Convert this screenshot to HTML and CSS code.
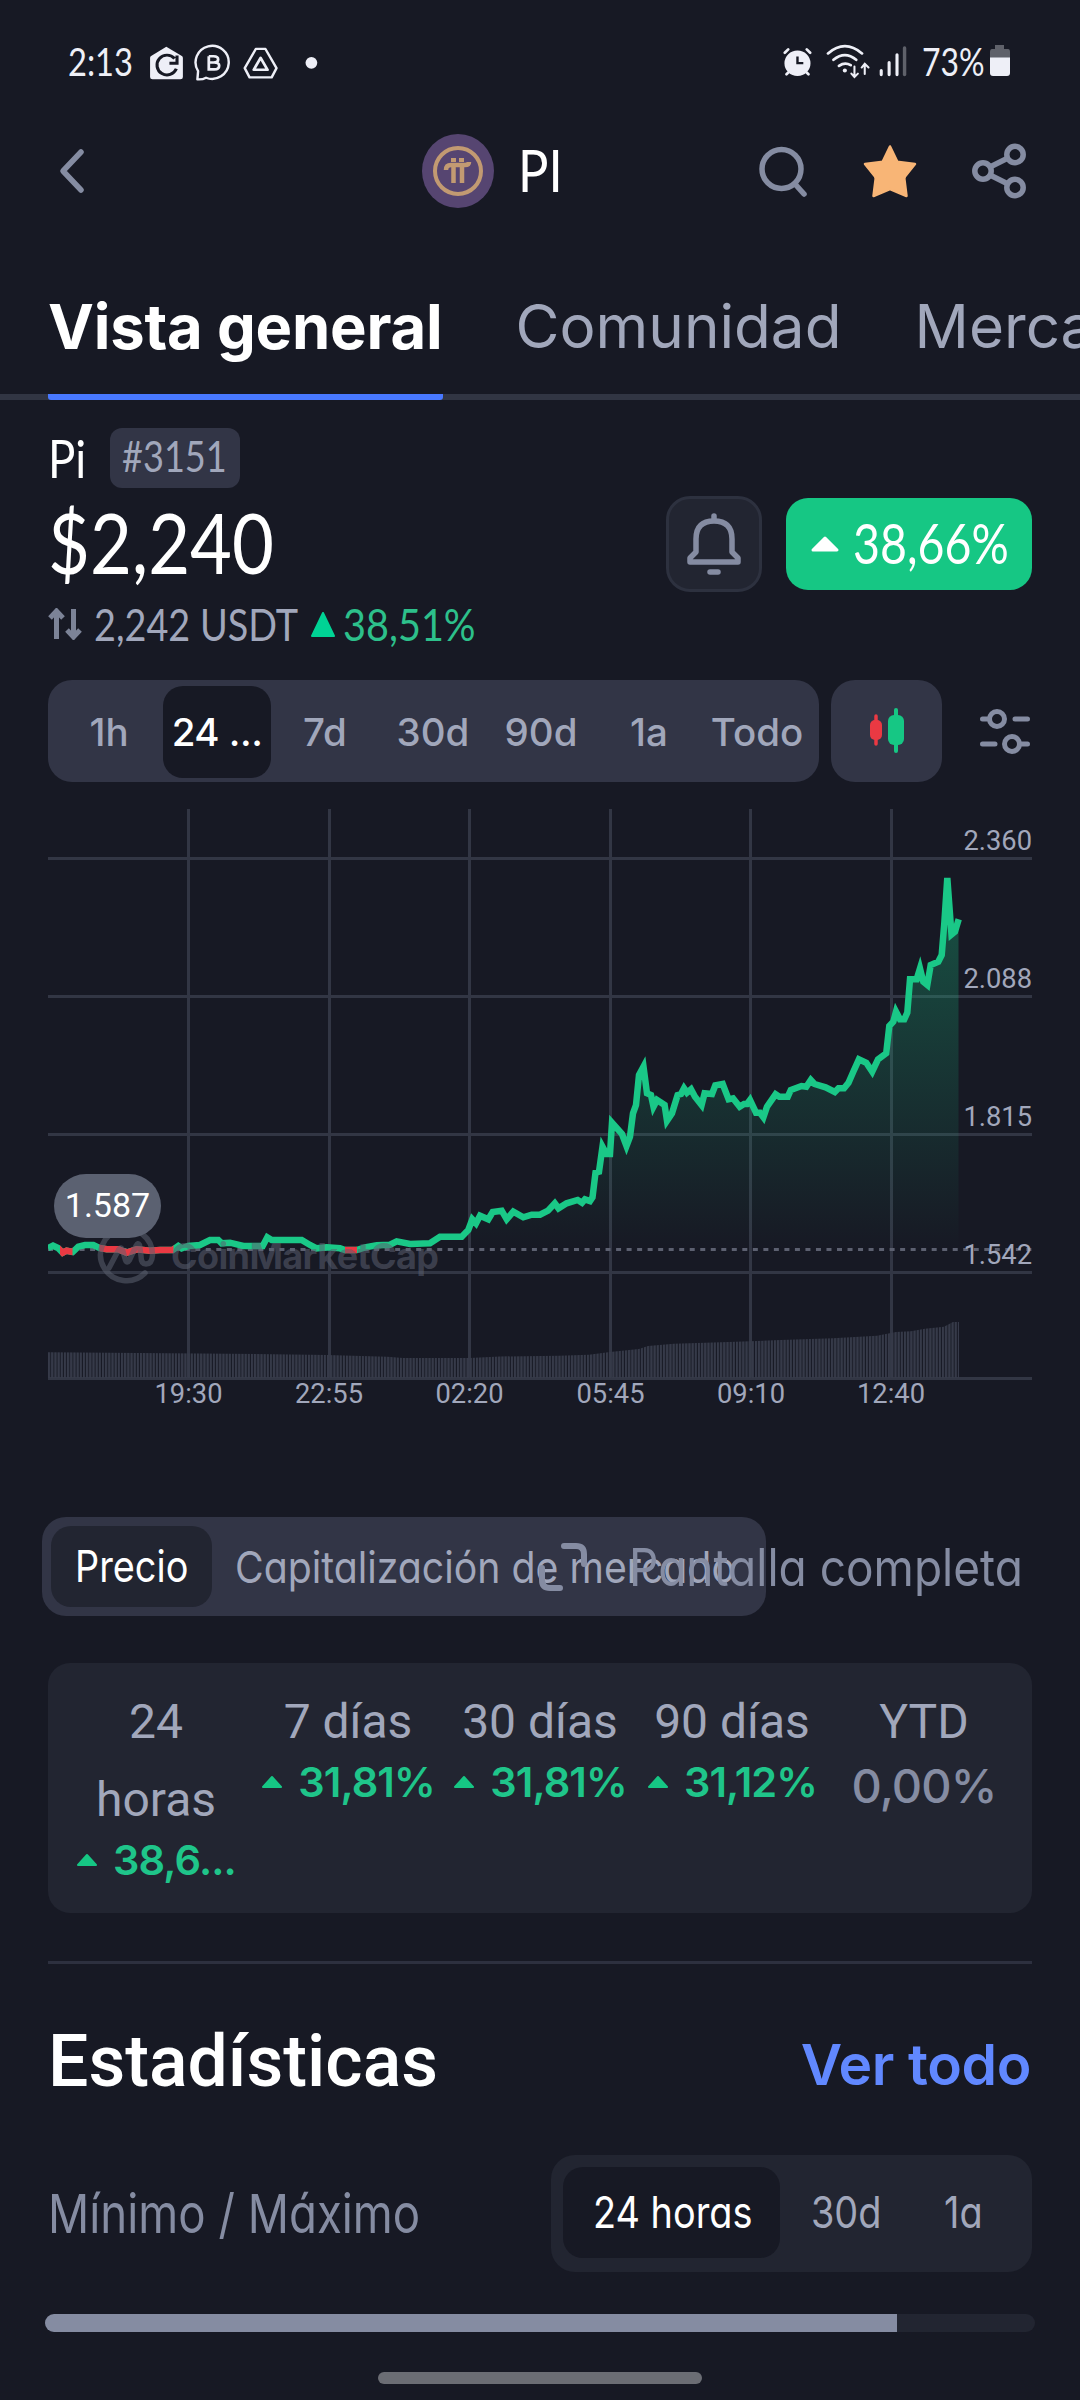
FILE: index.html
```html
<!DOCTYPE html>
<html lang="es">
<head>
<meta charset="utf-8">
<title>PI</title>
<link rel="stylesheet" href="styles.css">
</head>
<body>
<div class="status">
  <span class="status-time"><span class="narrow">2:13</span></span>
  <svg class="status-apps" viewBox="430 130 495 115" preserveAspectRatio="none">
    <path fill="#eeeff7" d="M483 138L528 166Q531 168 531 172V230Q531 237 524 237H443Q436 237 436 230V172Q436 168 439 166Z"/>
    <path d="M507 174A29 30 0 1 0 512 205M514 165V188H492" fill="none" stroke="#171924" stroke-width="9"/>
    <path d="M573 237L575 212A48 50 0 1 1 598 232Q588 238 573 237Z" fill="none" stroke="#eeeff7" stroke-width="7" stroke-linejoin="round"/>
    <path d="M606 167V207H622Q636 207 636 196Q636 186 622 186H606M606 167H620Q633 167 633 177Q633 186 620 186" fill="none" stroke="#eeeff7" stroke-width="8"/>
    <path d="M742 145H770L802 203L788 231H724L710 203Z" fill="none" stroke="#eeeff7" stroke-width="7" stroke-linejoin="round"/>
    <path d="M756 172L776 208H736Z" fill="none" stroke="#eeeff7" stroke-width="8" stroke-linejoin="round"/>
    <ellipse cx="903" cy="187" rx="17" ry="18" fill="#eeeff7"/>
  </svg>
  <svg class="status-signals" viewBox="700 130 370 110" preserveAspectRatio="none">
    <g fill="none" stroke="#eeeff7" stroke-width="8" stroke-linecap="round">
      <path d="M711 159L721 149M785 159L775 149M716 223L724 215M780 223L772 215"/>
      <circle cx="748" cy="190" r="34" fill="#eeeff7"/>
      <path d="M748 170V190H765" stroke="#171924" stroke-linecap="butt" stroke-width="7"/>
      <path d="M837 161Q886 118 936 161M853 180Q886 152 919 180M869 198Q886 186 903 196"/>
      <path d="M914 200V228M905 221L914 231L924 221M944 222V196M935 203L944 192L955 203" stroke-width="6"/>
      <path d="M992 212V224M1015 188V224M1038 165V224" stroke-width="9"/>
      <path d="M1060 145V224" stroke="#5f616a" stroke-width="10"/>
    </g>
    <circle cx="886" cy="212" r="6" fill="#eeeff7"/>
  </svg>
  <span class="status-battery"><span class="narrow">73%</span></span>
  <svg width="22" height="32" viewBox="0 0 22 32">
    <path d="M6 0H15V4H19Q21 4 21 7V13H1V7Q1 4 3 4H6Z" fill="#5f616a"/>
    <path d="M1 12.500H21V28Q21 31 18 31H4Q1 31 1 28Z" fill="#eeeff7"/>
  </svg>
</div>

<header class="header">
  <svg class="back" width="28" height="48" viewBox="0 0 28 48"><path d="M22 5L4 24L22 43" fill="none" stroke="#858ca2" stroke-width="5.500" stroke-linecap="round" stroke-linejoin="round"/></svg>
  <div class="coin">
    <svg width="72" height="74" viewBox="0 0 72 74">
      <ellipse cx="36" cy="37" rx="36" ry="37" fill="#564571"/>
      <ellipse cx="36" cy="37" rx="23" ry="23" fill="none" stroke="#c29a72" stroke-width="4"/>
      <path d="M24 36Q24 31 29 31H43Q47 31 47 28M31.500 31V49M40 31V49" fill="none" stroke="#c29a72" stroke-width="4.500"/>
      <path d="M29 24H34V28H29ZM37 24H42V28H37Z" fill="#c29a72"/>
    </svg>
    <span class="coin-name narrow">PI</span>
  </div>
  <div class="actions">
    <svg width="50" height="54" viewBox="0 0 50 54"><circle cx="22.500" cy="25" r="19.500" fill="none" stroke="#858ca2" stroke-width="5.500"/><path d="M36 40L45 50" stroke="#858ca2" stroke-width="5.500" stroke-linecap="round"/></svg>
    <svg width="54" height="56" viewBox="0 0 54 56"><path d="M27 3.500L34 18Q34.500 19 36 19L52 21L42 33.500Q41 35 41.500 37L43.500 53L27 46L10.500 53L12.500 37Q13 35 12 33.500L2 21L18 19Q19.500 19 20 18Z" fill="#f8b576" stroke="#f8b576" stroke-width="2.500" stroke-linejoin="round"/></svg>
    <svg width="56" height="56" viewBox="0 0 56 56"><g fill="none" stroke="#858ca2" stroke-width="5.500"><circle cx="12" cy="28" r="8.200"/><circle cx="44" cy="11.500" r="8.200"/><circle cx="44" cy="44.500" r="8.200"/><path d="M19 24L37 15M19 32L37 41"/></g></svg>
  </div>
</header>

<nav class="tabs">
  <span class="tab tab-active">Vista general</span>
  <span class="tab">Comunidad</span>
  <span class="tab">Mercados</span>
</nav>

<main class="page">
  <div class="name-row">
    <span class="name"><span class="narrow">Pi</span></span>
    <span class="rank"><span class="narrow">#3151</span></span>
  </div>
  <div class="price-row">
    <span class="price narrow">$2,240</span>
    <span class="bell">
      <svg width="56" height="64" viewBox="0 0 56 64"><g fill="none" stroke="#858ca2" stroke-width="5.500" stroke-linecap="round" stroke-linejoin="round"><path d="M28 8V4"/><path d="M4 50V46L10 40V27Q10 9 28 9Q46 9 46 27V40L52 46V50Z"/><path d="M24 60H32"/></g></svg>
    </span>
    <span class="change">
      <svg width="30" height="18" viewBox="0 0 30 18"><path d="M15 3L27 15H3Z" fill="#fff" stroke="#fff" stroke-width="3" stroke-linejoin="round"/></svg>
      <span class="change-value">38,66%</span>
    </span>
  </div>
  <div class="pair-row">
    <svg width="34" height="32" viewBox="0 0 34 32"><path d="M8.500 31V4M2 10L8.500 3L15 10M25.500 1V28M19 22L25.500 29L32 22" fill="none" stroke="#7c8397" stroke-width="5"/></svg>
    <span class="pair-price"><span class="narrow">2,242 USDT</span></span>
    <svg width="24" height="25" viewBox="0 0 24 25"><path d="M12 1L23 24H1Z" fill="#00d395" stroke="#00d395" stroke-width="2" stroke-linejoin="round"/></svg>
    <span class="pair-change narrow">38,51%</span>
  </div>

  <div class="range-row">
    <div class="range">
      <span>1h</span><span class="range-active">24 ...</span><span>7d</span><span>30d</span><span>90d</span><span>1a</span><span>Todo</span>
    </div>
    <div class="candle">
      <svg width="36" height="46" viewBox="0 0 36 46"><path d="M6 8V36" stroke="#ea3943" stroke-width="3.500" stroke-linecap="round"/><rect x="0" y="12" width="12" height="20" rx="5" fill="#ea3943"/><path d="M26 2V43" stroke="#16c784" stroke-width="4" stroke-linecap="round"/><rect x="18" y="7" width="16" height="30" rx="6" fill="#16c784"/></svg>
    </div>
    <svg class="sliders" width="52" height="48" viewBox="0 0 52 48"><g fill="none" stroke="#858ca2" stroke-width="5" stroke-linecap="round"><circle cx="18" cy="12" r="7.500"/><path d="M3.500 12H9M36 12H48.500"/><circle cx="33" cy="37" r="7.500"/><path d="M42 37H48.500M3.500 37H16"/></g></svg>
  </div>

  <svg class="chart" width="984" height="638" viewBox="48 782 984 638">
    <defs>
      <linearGradient id="area" gradientUnits="userSpaceOnUse" x1="0" y1="870" x2="0" y2="1249">
        <stop offset="0" stop-color="#1ac887" stop-opacity=".34"/>
        <stop offset="1" stop-color="#1ac887" stop-opacity="0"/>
      </linearGradient>
      <pattern id="bars" patternUnits="userSpaceOnUse" x="48" y="0" width="3.170" height="10"><rect width="2.200" height="10" fill="#363a49"/></pattern>
      <clipPath id="below"><rect x="60" y="1200" width="12.500" height="80"/><rect x="99.500" y="1200" width="74" height="80"/><rect x="345" y="1200" width="12" height="80"/></clipPath>
      <path id="line" d="M48 1248L53 1245.700L58 1248L62.700 1252.700L66.700 1250.700L72.700 1252L78.300 1246.700L85 1245H93.300L99.300 1248L106.700 1249.300H118.300L126.700 1252.700L136.700 1249.300L150 1250.700L160 1250H172.700L178.300 1246L181.700 1248.300L188.300 1246L200 1245L210 1240H218.300L221.700 1243.300L230 1242.700L243.300 1246H262.700L267.300 1237.300L271.700 1240H301.700L310 1245L316.700 1248.300L326.700 1247.300L340 1248.300L345 1250H356.700L365 1247.300L376.700 1245.300L390 1244.700L396.700 1241.300L410 1244L430 1243.300L440 1236.700H461.700L468.300 1230L472.300 1219.300L476 1223.300L480 1215.700L488.300 1219.300L492.700 1212L501.700 1210.700L506.700 1219.300L513.300 1211.700L523.300 1217.300L531.700 1214.700H540L548 1210.700L554.800 1203.300L558.500 1208.300L566.600 1203.300L577.700 1200L582 1202.700L585 1199.300L590 1201L592.500 1197.300L595.500 1172.700L599 1171.700L602.500 1146.700L606.500 1154H610L612 1122.700L622 1134L626.500 1146L630 1136.700L633 1113.300L636 1105L639 1075L643.500 1066.700L647 1093.300L651 1095L653.500 1106.700L657 1100L664.600 1105L667 1120.700L672 1113.300L677.600 1095L681 1094L684 1088.300L687 1092.700L691 1089.300L695 1096.700L701.600 1105L704.600 1093.300L712 1094L715.300 1085.300L722.700 1084L728.600 1099.300L733 1098.300L739.700 1106.700L744 1104H747L750 1100L756 1112.700H760L763.400 1117.300L767 1106.700L775.600 1094.300L779.300 1096.700H787.800L790.800 1090L801.500 1086L806.300 1086.700L810.800 1080L814.500 1084L825.600 1087.300L834.800 1092L838.500 1088.300H844L848.500 1082.700L853.300 1071.700L858.900 1059.300L866.300 1062.700L872.200 1071.700L878 1059.300L886.200 1053.300L889.300 1026L893.300 1021.700L896 1011.700L900 1019.300H904.300L907.300 1012.700L910 979.300H916.700L920 968.500L923.300 981.700L927.300 985L930.700 965L938.300 961.700L941.700 955L944.300 923.300L947.300 878L951.500 934.500L955 931.700L958.700 919.300"/>
    </defs>
    <g stroke="#323644" stroke-width="3">
      <path d="M188.500 809V1378M329.500 809V1378M469.500 809V1378M610.500 809V1378M750.500 809V1378M891.500 809V1378"/>
      <path d="M48 858.500H1032M48 996.500H1032M48 1134.500H1032M48 1272.500H1032M48 1378.500H1032"/>
    </g>
    <path fill="url(#bars)" d="M48 1352.300L227 1353.700L327 1355L387 1356.700L403 1358H470L500 1356.500L559 1355.700L589 1354.700L610 1352L639 1349L648 1346L674 1343.700L729 1342L781 1340L833 1338.300L877 1335.700L896 1332L911 1331.300L925 1328.700L944 1326.700L953 1322H959V1378H48Z"/>
    <path fill="url(#area)" d="M468 1249V1230L472 1219L476 1223L480 1216L488 1219L493 1212L502 1211L507 1219L513 1212L523 1217L540 1215L548 1211L555 1203L567 1203L578 1200L592 1197L595 1173L599 1172L602 1147L607 1154H610L612 1123L622 1134L626 1146L630 1137L633 1113L636 1105L639 1075L643 1067L647 1093L651 1095L653 1107L657 1100L665 1105L667 1121L672 1113L678 1095L684 1088L691 1089L702 1105L705 1093H712L715 1085L723 1084L729 1099L733 1098L740 1107L744 1104L750 1100L756 1113H760L763 1117L767 1107L776 1094L779 1097H788L791 1090L801 1086L811 1080L826 1087L835 1092L838 1088H844L849 1083L859 1059L866 1063L872 1072L878 1059L886 1053L889 1026L896 1012L900 1019H904L907 1013L910 979H917L920 968L927 985L931 965L938 962L942 955L944 923L947 878L951 935L955 932L958.500 919V1249Z"/>
    <path d="M48 1249.500H1032" stroke="#5c6070" stroke-width="3" stroke-dasharray="5 5.520"/>
    <g fill="none" stroke-width="6.500" stroke-miterlimit="5">
      <use href="#line" class="line-up"/>
      <use href="#line" class="line-down" clip-path="url(#below)"/>
    </g>
    <g class="watermark">
      <path d="M145 1273A26 26 0 1 1 152.500 1255Q152 1264 146 1264Q141 1264 141 1256L139.500 1245Q138 1242 136 1246L129.500 1260Q127 1264 125.500 1260L122.500 1250Q121 1246 118.500 1250L109 1268" fill="none" stroke-width="5.500" stroke-linecap="round"/>
      <text x="171" y="1269" textLength="268">CoinMarketCap</text>
    </g>
    <rect x="54" y="1174" width="107" height="64" rx="32" fill="#5b6171"/>
    <text class="pill" x="107.500" y="1217">1.587</text>
    <g class="axis axis-y"><text x="1032" y="850">2.360</text><text x="1032" y="988">2.088</text><text x="1032" y="1126">1.815</text><text x="1032" y="1264">1.542</text></g>
    <g class="axis axis-x"><text x="188.500" y="1403">19:30</text><text x="329" y="1403">22:55</text><text x="469.500" y="1403">02:20</text><text x="610.500" y="1403">05:45</text><text x="751" y="1403">09:10</text><text x="891" y="1403">12:40</text></g>
  </svg>

  <div class="mode-row">
    <div class="mode">
      <span class="mode-active"><span class="round">Precio</span></span>
      <span class="mode-cap round">Capitalización de mercado</span>
    </div>
    <div class="fullscreen">
      <svg width="50" height="50" viewBox="0 0 50 50"><path d="M26 4H38Q46 4 46 12V22M4 26V38Q4 46 12 46H22" fill="none" stroke="#858ca2" stroke-width="6" stroke-linecap="round"/></svg>
      <span class="round">Pantalla completa</span>
    </div>
  </div>

  <div class="periods">
    <div class="period"><span class="period-label">24 horas</span><span class="period-value"><svg width="22" height="14" viewBox="0 0 22 14"><path d="M11 2L20 12H2Z"/></svg>38,6...</span></div>
    <div class="period"><span class="period-label">7 días</span><span class="period-value"><svg width="22" height="14" viewBox="0 0 22 14"><path d="M11 2L20 12H2Z"/></svg>31,81%</span></div>
    <div class="period"><span class="period-label">30 días</span><span class="period-value"><svg width="22" height="14" viewBox="0 0 22 14"><path d="M11 2L20 12H2Z"/></svg>31,81%</span></div>
    <div class="period"><span class="period-label">90 días</span><span class="period-value"><svg width="22" height="14" viewBox="0 0 22 14"><path d="M11 2L20 12H2Z"/></svg>31,12%</span></div>
    <div class="period"><span class="period-label">YTD</span><span class="period-value period-flat">0,00%</span></div>
  </div>

  <div class="divider"></div>

  <div class="stats-head"><h2>Estadísticas</h2><a class="see-all">Ver todo</a></div>
  <div class="minmax">
    <span class="minmax-label"><span class="round">Mínimo / Máximo</span></span>
    <div class="span-pick">
      <span class="pick pick-active"><span class="round">24 horas</span></span>
      <span class="pick pick-month"><span class="round">30d</span></span>
      <span class="pick pick-year"><span class="round">1a</span></span>
    </div>
  </div>
  <div class="meter"><div class="meter-fill"></div></div>
</main>
<div class="home"></div>
</body>
</html>
```
FILE: styles.css
```css
* { box-sizing: border-box; }
body { margin: 0; width: 1080px; height: 2400px; overflow: hidden; background: #171924; color: #fff; font-family: Inter, sans-serif; }
svg { display: block; flex: none; }
span { white-space: nowrap; }

/* condensed geometric faces */
.narrow { display: inline-block; font-family: Lato, sans-serif; transform: scaleX(.86); transform-origin: left; }
.round { display: inline-block; font-family: Inter, sans-serif; font-feature-settings: "cv11"; transform: scaleX(.86); transform-origin: left; }

.status { display: flex; align-items: center; height: 122px; padding-left: 68px; color: #eeeff7; font-size: 38px; }
.status-time { width: 80px; }
.status-apps { width: 171px; height: 38px; margin-top: 3px; }
.status-signals { width: 127px; height: 37px; margin: 0 14px 0 462px; }
.status-battery { width: 67px; }
.status-battery .narrow { transform: scaleX(.84); }

.header { display: flex; align-items: center; height: 98px; padding: 0 53px 0 59px; }
.coin { display: flex; align-items: center; gap: 24px; width: 252px; margin-left: 335px; }
.coin-name { margin-top: -4px; font-size: 59px; }
.actions { display: flex; align-items: center; gap: 54px; margin-left: auto; }

.tabs { display: flex; gap: 73px; height: 180px; padding-left: 48px; overflow: hidden; font-size: 60.200px; line-height: 80px; box-shadow: inset 0 -6px #313543; color: #a1a7bb; }
.tab { height: 180px; padding-top: 67px; }
.tab-active { width: 396px; color: #fff; font-weight: 700; font-size: 61.500px; letter-spacing: -.2px; border-bottom: 6px solid #4878ff; border-radius: 3px; }

.page { padding: 28px 48px 0; }
.name-row { display: flex; align-items: center; height: 60px; }
.name { width: 62px; font-size: 53px; }
.rank { width: 130px; height: 60px; padding-left: 12px; border-radius: 12px; background: #323546; color: #a1a7bb; font-size: 42px; line-height: 57px; }
.price-row { display: flex; align-items: center; gap: 24px; height: 96px; margin-top: 8px; }
.price { margin: -5px auto 0 0; font-size: 84px; line-height: 90px; }
.bell { display: grid; place-items: center; width: 96px; height: 96px; border: 3px solid #2d313f; border-radius: 24px; background: #222531; }
.change { display: flex; align-items: center; gap: 13px; width: 246px; height: 92px; padding-left: 24px; border-radius: 22px; background: #16c784; font-size: 56px; }
.change-value { margin-top: -3px; font-family: Lato, sans-serif; transform: scaleX(.83); transform-origin: left; }
.pair-row { display: flex; align-items: center; height: 64px; font-size: 45px; line-height: 60px; color: #a1a7bb; }
.pair-price { width: 217px; margin-left: 12px; }
.pair-price .narrow { transform: scaleX(.84); }
.pair-change { margin-left: 8px; color: #2dc08b; transform: scaleX(.88); }

.range-row { display: flex; align-items: center; margin-top: 24px; }
.range { display: grid; grid-template-columns: repeat(7, 108px); width: 771px; height: 102px; padding: 6px 8px 7px 7px; border-radius: 24px; background: #323546; color: #a1a7bb; font-size: 38.500px; font-weight: 500; line-height: 92px; text-align: center; }
.range-active { border-radius: 20px; background: #171924; color: #fff; letter-spacing: -.5px; }
.candle { display: grid; place-items: center; width: 111px; height: 102px; padding-left: 2px; margin-left: 12px; border-radius: 24px; background: #323546; }
.sliders { margin: 0 1px 0 auto; }

.line-up { stroke: #1ac887; }
.line-down { stroke: #ea3943; }
.watermark { stroke: #5b6070; stroke-opacity: .55; }
.watermark text { stroke: none; fill: #5b6070; fill-opacity: .55; font: 700 36px Inter, sans-serif; }
.pill { font: 34px Roboto, sans-serif; fill: #fff; text-anchor: middle; }
.axis { font: 27.300px Roboto, sans-serif; fill: #a1a7bb; }
.axis-y { text-anchor: end; }
.axis-x { text-anchor: middle; }

.mode-row { position: relative; height: 99px; margin: 97px 0 0 -6px; }
.mode { display: flex; align-items: center; width: 724px; height: 99px; padding: 0 9px; border-radius: 24px; background: #323546; font-size: 44px; }
.mode-active { flex: none; width: 161px; height: 81px; padding-left: 24px; border-radius: 20px; background: #222531; line-height: 80px; }
.mode-cap { margin-left: 23px; color: #a1a7bb; transform: scaleX(.892); }
.fullscreen { position: absolute; left: 496px; top: 0; display: flex; align-items: center; gap: 41px; height: 100px; color: #858ca2; font-size: 52px; }
.fullscreen .round { transform: scaleX(.885); }

.periods { display: grid; grid-template-columns: repeat(5, 192px); height: 250px; margin-top: 47px; padding: 20px 12px; border-radius: 22px; background: #222531; }
.period { text-align: center; }
.period-label { display: block; width: 168px; margin: 0 auto; color: #a1a7bb; font: 48px/78px Roboto, sans-serif; white-space: normal; }
.period-value { display: flex; align-items: center; justify-content: center; gap: 15px; height: 42px; color: #1fc58a; font-size: 41.500px; font-weight: 600; letter-spacing: -.9px; }
.period-value svg { fill: #16c784; stroke: #16c784; stroke-width: 2; stroke-linejoin: round; }
.period-flat { margin-top: 3px; color: #858ca2; font-size: 47px; font-weight: 500; }

.divider { height: 3px; margin-top: 48px; background: #2d303f; }
.stats-head { display: flex; align-items: center; justify-content: space-between; height: 87px; margin-top: 54px; }
h2 { margin: 0; font: 500 71.500px Roboto, sans-serif; }
.see-all { padding: 6px 1px 0 0; color: #6188ff; font-size: 57px; font-weight: 600; letter-spacing: -.4px; }
.minmax { display: flex; align-items: center; justify-content: space-between; height: 117px; margin-top: 50px; color: #a1a7bb; font-size: 44px; }
.minmax-label { width: 400px; color: #858ca2; font-size: 54px; }
.minmax-label .round { transform: scaleX(.845); }
.span-pick { display: flex; align-items: center; width: 481px; height: 117px; padding: 0 12px; border-radius: 24px; background: #222531; }
.pick { height: 91px; line-height: 91px; margin-top: -2px; }
.pick-active { width: 217px; padding-left: 30px; border-radius: 20px; background: #171924; color: #fff; }
.pick-month { margin-left: 31px; width: 133px; }
.meter { height: 18px; width: 990px; margin: 42px 0 0 -3px; border-radius: 9px; background: #222531; overflow: hidden; }
.meter-fill { width: 852px; height: 18px; background: #858ca2; }
.home { width: 324px; height: 12px; margin: 40px auto 0; border-radius: 6px; background: #6b6d74; }
```
